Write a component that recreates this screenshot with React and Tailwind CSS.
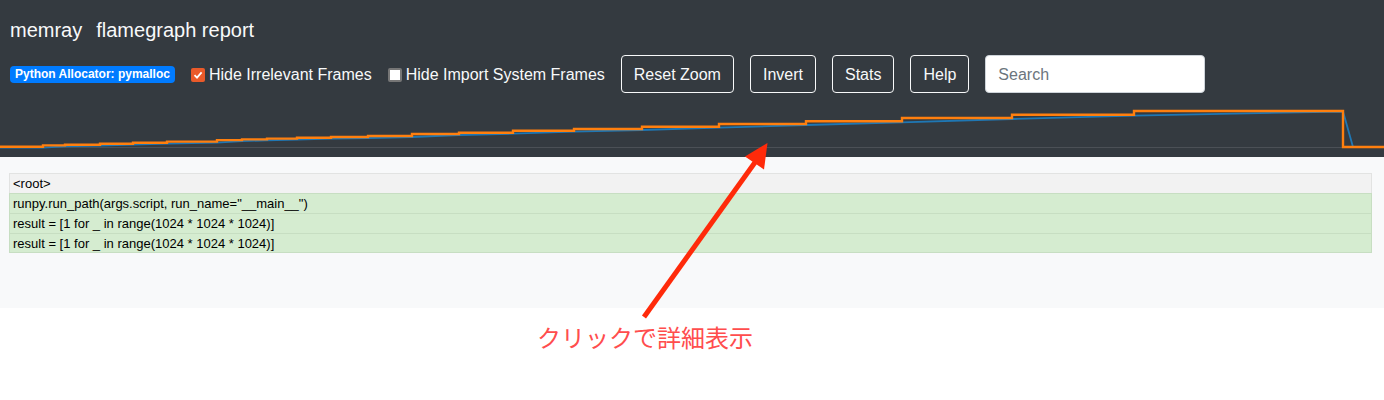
import React from "react";

// Memory-over-time chart: orange = heap size (step), blue = resident estimate
const steps = [
  [0, 146.7], [43, 145.4], [65, 144.7], [100, 143.7], [133, 142.7], [167, 141.6],
  [217, 140.1], [242, 139.4], [267, 138.6], [297, 137.7], [331, 137.0], [368, 136],
  [412, 134], [459, 132.7], [513, 130.7], [574, 129], [642, 126.7], [719, 124],
  [806, 121.3], [902, 118], [1012, 114.7], [1134, 111],
];
const TOP = 100;

function stepPath() {
  let d = "";
  steps.forEach(([x, y], i) => {
    const yy = y - TOP;
    if (i === 0) d += `M${x},${yy}`;
    else d += ` H${x} V${yy}`;
  });
  d += ` H1343 V${147 - TOP} H1384`;
  return d;
}

function bluePath() {
  const pts = [];
  for (let i = 0; i < steps.length; i++) {
    const x = steps[i][0];
    const y = (i === 0 ? steps[0][1] : steps[i - 1][1]) + 1;
    pts.push(`${x},${y - TOP}`);
  }
  pts.push(`1343,${111.5 - TOP}`);
  pts.push(`1353,${147 - TOP}`);
  return "M" + pts.join(" L");
}

function Checkbox({ checked }) {
  return checked ? (
    <span className="flex h-[14px] w-[14px] items-center justify-center rounded-[2px] bg-[#ea5a2a]">
      <svg width="10" height="10" viewBox="0 0 10 10">
        <path d="M1.5 5.2 L4 7.6 L8.6 2.4" fill="none" stroke="white" strokeWidth="1.8" />
      </svg>
    </span>
  ) : (
    <span className="block h-[14px] w-[14px] rounded-[2px] border-2 border-[#767676] bg-white" />
  );
}

function OutlineButton({ children }) {
  return (
    <button className="ml-[16px] h-[38px] rounded-[4px] border border-[#f8f9fa] px-[12px] pt-px text-[16px] text-[#f8f9fa]">
      {children}
    </button>
  );
}

const rows = [
  { label: "<root>", root: true },
  { label: 'runpy.run_path(args.script, run_name="__main__")' },
  { label: "result = [1 for _ in range(1024 * 1024 * 1024)]" },
  { label: "result = [1 for _ in range(1024 * 1024 * 1024)]" },
];

export default function App() {
  return (
    <div className="relative w-[1384px] bg-white font-['Liberation_Sans',Arial,sans-serif]">
      <header className="bg-[#343a40] text-[#f8f9fa]">
        <div className="px-[10px] pt-[15px]">
          <div className="text-[20px] leading-[30px]">
            <span className="mr-[14px]">memray</span>
            <span>flamegraph report</span>
          </div>
          <div className="mt-[10px] flex h-[38px] items-center">
            <span className="flex h-[17px] items-center rounded-[4px] bg-[#007bff] px-[5px] text-[12px] font-bold leading-none text-white">
              Python Allocator: pymalloc
            </span>
            <label className="ml-[16px] flex items-center pt-px">
              <Checkbox checked />
              <span className="ml-[4px] text-[16px]">Hide Irrelevant Frames</span>
            </label>
            <label className="ml-[16px] flex items-center pt-px">
              <Checkbox />
              <span className="ml-[4px] text-[16px]">Hide Import System Frames</span>
            </label>
            <OutlineButton>Reset Zoom</OutlineButton>
            <OutlineButton>Invert</OutlineButton>
            <OutlineButton>Stats</OutlineButton>
            <OutlineButton>Help</OutlineButton>
            <input
              className="ml-[16px] h-[38px] w-[220px] rounded-[4px] border border-[#ced4da] bg-white px-[12px] pt-px text-[16px] text-[#495057] placeholder:text-[#6c757d] outline-none"
              placeholder="Search"
            />
          </div>
        </div>
        <svg className="mt-[7px] block" width="1384" height="57" viewBox="0 0 1384 57">
          <line x1="0" y1="47.5" x2="1384" y2="47.5" stroke="#4b5056" strokeWidth="1" />
          <path d={bluePath()} fill="none" stroke="#1f77b4" strokeWidth="1.8" />
          <path d={stepPath()} fill="none" stroke="#ff7f0e" strokeWidth="2.4" />
        </svg>
      </header>

      <section className="bg-[#f8f9fa] pb-[55px] pl-[9px] pr-[12px] pt-[16px]">
        {rows.map((r, i) => (
          <div
            key={i}
            className={
              "h-[20px] border-x border-t pl-[3px] text-[13px] leading-[19px] text-black " +
              (i === rows.length - 1 ? "border-b " : "") +
              (r.root
                ? "border-[#e2e3e2] bg-[#f2f2f2]"
                : "border-[#c7dec2] bg-[#d5ecd0]")
            }
          >
            {r.label}
          </div>
        ))}
      </section>

      <div className="h-[92px] pt-[13px]">
        <p className="ml-[537px] text-[24px] leading-[32px] text-[#ff4d4d] font-['Noto_Sans_CJK_JP',sans-serif]">
          クリックで詳細表示
        </p>
      </div>

      {/* callout arrow pointing at the chart */}
      <svg
        className="pointer-events-none absolute left-0 top-0"
        width="1384"
        height="400"
        viewBox="0 0 1384 400"
      >
        <line x1="644" y1="317" x2="756" y2="161" stroke="#ff2a0a" strokeWidth="5" />
        <polygon points="767.5,143 745,156.5 764,169.5" fill="#ff2a0a" />
      </svg>
    </div>
  );
}
